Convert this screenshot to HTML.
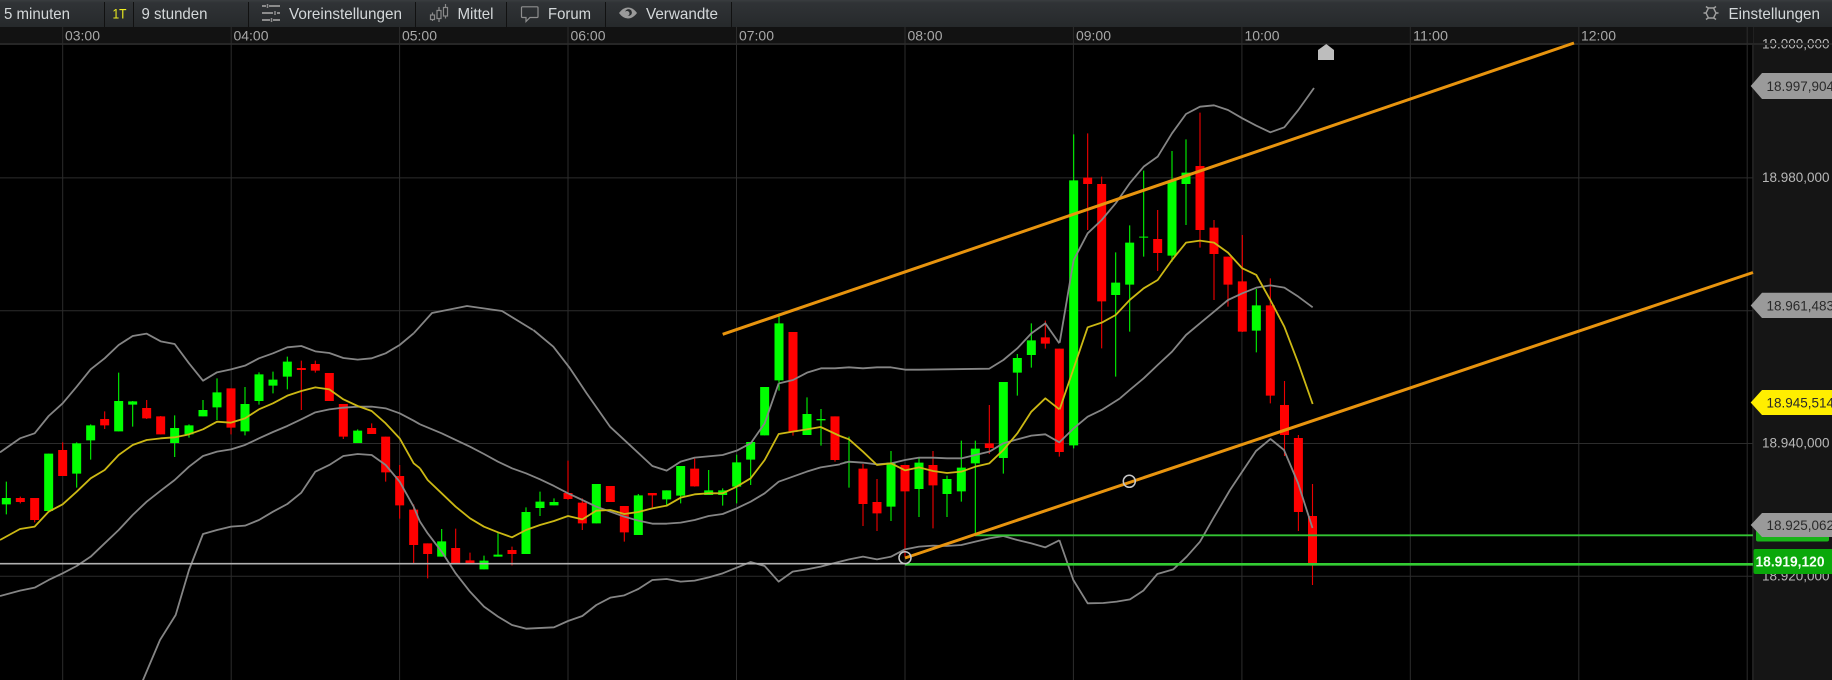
<!DOCTYPE html>
<html lang="de">
<head>
<meta charset="utf-8">
<title>Chart</title>
<style>
html,body{margin:0;padding:0;background:#000;width:1832px;height:680px;overflow:hidden}
svg{display:block}
text{font-family:"Liberation Sans",sans-serif;white-space:pre}
.t{font-size:16px;fill:#d4d8da}
.x{font-size:13.5px;fill:#a8a8a8}
.y{font-size:13.5px;fill:#b8b8b8}
.d{font-size:13.5px;fill:#2a2a2a}
.gw{fill:none;stroke:#00f000;stroke-width:3.4}
.gb{fill:none;stroke:#00ff00;stroke-width:27}
.rw{fill:none;stroke:#ec0000;stroke-width:3.4}
.rb{fill:none;stroke:#ff0000;stroke-width:27}
.b{fill:none;stroke:#858585;stroke-width:5.4;stroke-linejoin:round}
.m{fill:none;stroke:#ccb814;stroke-width:5.4;stroke-linejoin:round}
</style>
</head>
<body>
<svg xmlns="http://www.w3.org/2000/svg" width="1832" height="680" viewBox="0 0 1832 680">
<defs>
<linearGradient id="tb" x1="0" y1="0" x2="0" y2="1"><stop offset="0" stop-color="#3a3d40"/><stop offset=".1" stop-color="#303336"/><stop offset="1" stop-color="#26292b"/></linearGradient>
</defs>
<rect width="1832" height="680" fill="#000"/>

<!-- price axis background -->
<rect x="1753" y="27" width="79" height="653" fill="#151515"/>
<rect x="1752" y="27" width="2" height="653" fill="#202020"/>

<!-- time axis -->
<rect x="0" y="27" width="1753" height="16" fill="#121212"/>
<rect x="0" y="43" width="1832" height="2" fill="#262626"/>

<!-- grid -->
<g fill="none" stroke="#2c2c2c" stroke-width="1">
<path d="M62.7 27V680M231.2 27V680M399.6 27V680M568 27V680M736.5 27V680M905 27V680M1073.4 27V680M1241.9 27V680M1410.3 27V680M1578.8 27V680M1747.2 27V680"/>
<path d="M0 177.9H1753M0 310.7H1753M0 443.5H1753M0 576.3H1753"/>
</g>

<!-- candles zone A -->
<g transform="translate(0,330) scale(.33333)">
<path class="gw" d="M19 455V553M146 371V543M230 337V473M272 283V389M356 128V304M398 213V290M524 256V381M567 283V323M609 210V259M651 145V270M735 171V316M777 127V224M819 125V190M862 80V178M1073 298V339"/>
<path class="gb" d="M19 504V523M146 371V543M230 340V431M272 286V331M356 213V304M398 214V224M524 294V339M567 286V313M609 240V259M651 187V232M735 222V304M777 133V213M819 149V167M862 95V140M1073 302V339"/>
<path class="rw" d="M61 500V520M104 504V577M188 337V438M314 244V297M440 210V267M482 258V313M693 175V313M904 92V240M946 92V128M988 129V213M1030 222V327M1115 280V312M1157 320V455M1199 405V566M1241 523V700"/>
<path class="rb" d="M61 504V516M104 504V570M188 360V438M314 267V286M440 234V265M482 259V313M693 175V293M904 114V120M946 102V122M988 129V213M1030 222V320M1115 294V312M1157 320V427M1199 438V526M1241 539V645"/>
</g>
<!-- candles zone B -->
<g transform="translate(420,330) scale(.33333)">
<path class="gw" d="M65 597V680M192 677V718M234 605V680M318 532V672M360 485V558M402 505V526M529 462V580M655 492V615M740 481V530M782 408V520M866 420V495M908 475V527M950 374V520M992 336V465M1034 171V316"/>
<path class="gb" d="M65 634V680M192 692V718M234 674V680M318 546V672M360 515V534M402 516V526M529 462V580M655 496V615M740 481V508M782 408V497M866 481V495M908 481V495M950 397V470M992 336V389M1034 171V316"/>
<path class="rw" d="M23 640V745M107 596V700M150 668V700M276 650V706M444 392V510M487 505V600M571 468V516M613 528V635M697 489V532M824 386V470"/>
<path class="rb" d="M23 640V672M107 654V700M150 691V700M276 660V672M444 489V507M487 518V580M571 468V516M613 528V607M697 489V496M824 416V469"/>
</g>
<!-- candles zone C -->
<g transform="translate(720,280) scale(.33333)">
<path class="gw" d="M177 100V332M261 352V465M303 387V497M387 470V623M513 513V723M597 535V711M681 587V711M724 482V665M766 482V765M850 306V581M892 222V347M934 130V263"/>
<path class="gb" d="M177 130V301M261 402V465M303 417V421M387 544V548M513 548V680M597 548V627M681 597V642M724 563V634M766 506V550M850 306V534M892 234V278M934 181V225"/>
<path class="rw" d="M219 156V467M345 409V545M429 552V738M471 597V753M555 555V830M639 513V745M808 375V522M976 122V206M1018 206V530"/>
<path class="rb" d="M219 156V456M345 409V540M429 566V672M471 666V700M555 555V634M639 555V616M808 490V504M976 172V191M1018 206V516"/>
</g>
<!-- candles zone D -->
<g transform="translate(1000,100) scale(.33333)">
<path class="gw" d="M221 103V1045M347 457V830M389 376V695M431 212V470M516 153V485M558 118V375M769 567V757"/>
<path class="gb" d="M221 241V1036M347 548V585M389 428V554M431 410V413M516 242V467M558 218V252M769 616V692"/>
<path class="rw" d="M263 100V390M305 230V745M473 330V513M600 38V443M642 360V600M684 470V620M727 405V696M811 535V910"/>
<path class="rb" d="M263 233V252M305 252V604M473 417V459M600 198V390M642 383V462M684 470V554M727 544V695M811 616V887"/>
</g>
<!-- last candles (absolute) -->
<g fill="none">
<path d="M1284.5 381V456M1298.4 435V531M1312.5 484V585" stroke="#ec0000" stroke-width="1.1"/>
<path d="M1284.5 405V435M1298.4 438V512M1312.5 516V563" stroke="#ff0000" stroke-width="9"/>
</g>

<!-- Bollinger bands / MA -->
<g transform="translate(0,330) scale(.33333)">
<polyline class="b" points="0,367 60,325 104,310 146,258 188,220 230,170 272,118 314,85 356,45 398,18 440,11 482,34 524,42 567,100 609,152 651,127 693,118 735,107 777,85 819,70 862,52 904,48 946,64 988,69 1030,84 1073,89 1115,85 1157,70 1199,45 1241,10"/>
<polyline class="b" points="0,798 60,782 104,773 146,750 188,730 230,708 272,680 314,640 356,600 398,555 440,515 482,482 524,450 567,410 609,378 651,365 693,358 735,345 777,325 819,306 862,288 904,268 946,247 988,238 1030,233 1073,230 1115,230 1157,235 1199,250 1241,272 1260,283"/>
<polyline class="b" points="427,1055 480,930 527,855 567,720 609,612 651,600 693,590 735,587 777,570 819,545 862,522 904,488 946,425 988,405 1030,378 1073,372 1115,375 1157,405 1199,455 1241,530 1260,575"/>
<polyline class="m" points="0,630 60,597 104,590 146,545 188,523 230,485 272,445 314,420 356,375 398,345 440,330 482,325 524,322 567,313 609,298 651,275 693,278 735,265 777,238 819,220 862,197 904,183 946,172 988,178 1030,208 1073,228 1115,243 1157,280 1199,325 1241,400 1260,415"/>
</g>
<polyline fill="none" stroke="#858585" stroke-width="1.8" stroke-linejoin="round" points="413.7,333.3 432,313 467,306 502,311 533,330"/>
<g transform="translate(420,330) scale(.33333)">
<polyline class="b" points="340,0 400,50 450,115 500,190 570,290 640,355 697,408 740,422 782,395 824,383 908,375 950,362 992,340 1034,280 1076,160"/>
<polyline class="b" points="0,283 65,310 107,330 150,350 192,372 234,395 276,415 318,430 360,448 402,468 444,490 487,510 529,530 571,545 613,560 655,572 697,581 740,581 782,578 824,570 866,558 908,552 950,535 992,515 1034,490 1076,455 1118,440 1160,425 1202,412 1260,403"/>
<polyline class="b" points="0,575 23,610 65,665 107,730 150,785 192,830 234,860 276,885 318,896 402,892 444,873 487,858 529,825 571,803 613,796 655,777 697,750 740,747 782,755 824,752 866,742 908,730 950,713 992,696 1034,708 1076,755 1118,725 1160,718 1202,710 1260,695"/>
<polyline class="m" points="0,415 23,450 65,490 107,530 150,565 192,590 234,607 276,622 318,600 360,585 402,573 444,558 487,568 529,542 571,540 613,552 655,546 697,535 740,527 782,503 824,493 866,490 908,490 950,470 992,445 1034,390 1076,312 1118,305 1160,298 1202,291 1260,318"/>
</g>
<g transform="translate(720,280) scale(.33333)">
<polyline class="b" points="177,310 219,300 261,278 303,265 345,265 387,262 429,265 471,262 513,262 555,269 597,269 808,266 850,240 892,205 934,160 976,130 1018,190"/>
<polyline class="b" points="360,552 387,545 429,548 471,553 513,550 555,540 597,533 639,533 681,535 724,535 766,525 808,515 850,490 892,478 934,467 976,463 1018,487 1061,445 1103,410 1145,390 1200,355"/>
<polyline class="b" points="360,845 387,838 429,830 471,838 513,830 555,808 597,800 639,797 681,798 724,795 766,785 808,775 850,768 892,780 934,790 976,802 1018,781"/>
<polyline class="m" points="360,468 387,478 429,515 471,555 513,550 555,571 597,562 639,573 681,579 724,575 766,560 808,550 850,510 892,460 934,395 976,355 1018,388"/>
</g>
<g transform="translate(1000,100) scale(.33333)">
<polyline class="b" points="179,728 221,480 263,400 305,360 347,310 389,250 431,200 473,170 516,100 558,42 600,20 642,16 684,30 727,55 769,77 811,97 853,82 895,30 942,-36"/>
<polyline class="b" points="360,895 389,870 431,835 473,795 516,755 558,705 600,670 642,635 684,600 727,580 769,563 811,556 853,563 895,590 938,622"/>
<polyline class="m" points="179,928 263,682 305,668 347,645 389,600 431,565 473,540 516,480 558,428 600,422 642,428 684,458 727,505 769,525 811,600 853,680 895,790 938,912"/>
</g>
<g transform="translate(1040,460) scale(.33333)">
<polyline class="b" points="58,240 100,360 143,430 190,429 230,425 270,418 310,392 352,342 400,328 440,290 480,245 520,175 570,90 630,0"/>
</g>
<polyline fill="none" stroke="#858585" stroke-width="1.8" stroke-linejoin="round" points="1250,460 1256,451 1270.5,439 1284,450 1298,483 1312.5,528"/>

<!-- drawn lines -->
<path d="M0 563.7H905" stroke="#b0b0b0" stroke-width="1.6" fill="none"/>
<path d="M975 535.3H1753" stroke="#33c433" stroke-width="1.8" fill="none"/>
<path d="M905 564.3H1753" stroke="#33cc33" stroke-width="2.6" fill="none"/>
<path d="M722.7 334.3L1574 43M905 558L1753 272.5" stroke="#e8940e" stroke-width="3" fill="none"/>
<circle cx="905" cy="557.7" r="6" fill="none" stroke="#c8c8c8" stroke-width="1.5"/>
<circle cx="1129.3" cy="481.3" r="6" fill="none" stroke="#c8c8c8" stroke-width="1.5"/>
<polygon points="1326.3,44 1334,50 1334,60 1318,60 1318,50" fill="#bdbdbd"/>

<!-- price axis labels -->
<text class="y" x="1762" y="48.5" textLength="67.5" lengthAdjust="spacingAndGlyphs">19.000,000</text>
<rect x="1754" y="43" width="78" height="2" fill="#262626"/>
<text class="y" x="1762" y="182" textLength="67.5" lengthAdjust="spacingAndGlyphs">18.980,000</text>
<text class="y" x="1762" y="447.5" textLength="67.5" lengthAdjust="spacingAndGlyphs">18.940,000</text>
<text class="y" x="1762" y="580.5" textLength="67.5" lengthAdjust="spacingAndGlyphs">18.920,000</text>

<rect x="1756" y="530" width="73" height="11.500" rx="2" fill="#19b419"/>
<polygon points="1762,73 1832,73 1832,99 1762,99 1750.7,86" fill="#9a9a9a"/>
<polygon points="1762,292.700 1832,292.700 1832,318 1762,318 1750.7,305.500" fill="#9a9a9a"/>
<polygon points="1762,390 1832,390 1832,415 1762,415 1750.7,402.500" fill="#ffee00"/>
<polygon points="1762,513 1832,513 1832,537 1762,537 1750.7,525" fill="#9a9a9a"/>
<rect x="1753.500" y="549" width="90" height="25" rx="2" fill="#0aa80a"/>
<text class="d" x="1766.500" y="91" textLength="67.500" lengthAdjust="spacingAndGlyphs">18.997,904</text>
<text class="d" x="1766.500" y="310.500" textLength="67.500" lengthAdjust="spacingAndGlyphs">18.961,483</text>
<text class="d" x="1766.500" y="407.500" textLength="67.500" lengthAdjust="spacingAndGlyphs">18.945,514</text>
<text class="d" x="1766.500" y="530" textLength="67.500" lengthAdjust="spacingAndGlyphs">18.925,062</text>
<text x="1755.500" y="566.500" font-size="14.500" font-weight="700" fill="#f4fff4" textLength="69" lengthAdjust="spacingAndGlyphs">18.919,120</text>

<!-- time labels -->
<text class="x" x="65" y="40.500" textLength="35" lengthAdjust="spacingAndGlyphs">03:00</text>
<text class="x" x="233.500" y="40.500" textLength="35" lengthAdjust="spacingAndGlyphs">04:00</text>
<text class="x" x="402" y="40.500" textLength="35" lengthAdjust="spacingAndGlyphs">05:00</text>
<text class="x" x="570.500" y="40.500" textLength="35" lengthAdjust="spacingAndGlyphs">06:00</text>
<text class="x" x="739" y="40.500" textLength="35" lengthAdjust="spacingAndGlyphs">07:00</text>
<text class="x" x="907.500" y="40.500" textLength="35" lengthAdjust="spacingAndGlyphs">08:00</text>
<text class="x" x="1076" y="40.500" textLength="35" lengthAdjust="spacingAndGlyphs">09:00</text>
<text class="x" x="1244.500" y="40.500" textLength="35" lengthAdjust="spacingAndGlyphs">10:00</text>
<text class="x" x="1413" y="40.500" textLength="35" lengthAdjust="spacingAndGlyphs">11:00</text>
<text class="x" x="1581" y="40.500" textLength="35" lengthAdjust="spacingAndGlyphs">12:00</text>

<!-- toolbar -->
<rect x="0" y="0" width="1832" height="27" fill="url(#tb)"/>
<path d="M104.500 2V27M133.500 2V27M248.500 2V27M415.500 2V27M506.500 2V27M605.500 2V27M731.500 2V27" stroke="#111" stroke-width="1" fill="none"/>
<text class="t" x="4" y="19" textLength="66" lengthAdjust="spacingAndGlyphs">5 minuten</text>
<text x="112.500" y="18.500" font-size="14" fill="#eeee20" textLength="14" lengthAdjust="spacingAndGlyphs">1T</text>
<text class="t" x="141.500" y="19" textLength="66" lengthAdjust="spacingAndGlyphs">9 stunden</text>
<text class="t" x="289" y="19" textLength="113" lengthAdjust="spacingAndGlyphs">Voreinstellungen</text>
<text class="t" x="457.500" y="19" textLength="36" lengthAdjust="spacingAndGlyphs">Mittel</text>
<text class="t" x="548" y="19" textLength="43" lengthAdjust="spacingAndGlyphs">Forum</text>
<text class="t" x="646" y="19" textLength="72" lengthAdjust="spacingAndGlyphs">Verwandte</text>
<text class="t" x="1728.500" y="19" textLength="91.500" lengthAdjust="spacingAndGlyphs">Einstellungen</text>

<!-- icon: sliders -->
<g stroke="#8c8c8c" stroke-width="2" fill="none">
<path d="M262 6H266M269 6H280M262 13H273M277 13H280M262 20H270M273 20H280"/>
<path d="M267.500 4V8M275 11V15M271.500 18V22" stroke-width="1.500"/>
</g>
<!-- icon: candles -->
<g stroke="#8a8a8a" stroke-width="1.200" fill="none">
<path d="M432.500 12.500V21"/>
<rect x="430.500" y="15" width="4" height="4.500" fill="#26292b"/>
<path d="M439 7V22"/>
<rect x="437" y="10.500" width="4" height="8" fill="#26292b"/>
<path d="M445.500 4V18.500"/>
<rect x="443.500" y="7.500" width="4" height="8.500" fill="#26292b"/>
</g>
<!-- icon: speech bubble -->
<path d="M522.500 6.800H537a1 1 0 0 1 1 1V16.500a1 1 0 0 1-1 1H530L526 21.500V17.500H522.500a1 1 0 0 1-1-1V7.800a1 1 0 0 1 1-1Z" fill="none" stroke="#8e8e8e" stroke-width="1.200"/>
<!-- icon: eye -->
<path d="M619 13Q623 7.500 628 7.500T637 13Q633 18.500 628 18.500T619 13Z" fill="#9a9a9a"/>
<circle cx="628.500" cy="12.500" r="3.400" fill="#2a2d2f"/>
<circle cx="627" cy="13.500" r="2.500" fill="#9a9a9a"/>
<!-- icon: settings -->
<g stroke="#a0a0a0" fill="none">
<polygon points="1706,13 1708.500,8 1713.500,8 1716,13 1713.500,18 1708.500,18" stroke-width="1.400"/>
<path d="M1703.500 13H1706M1716 13H1718.500M1706 6.500L1708.300 8.200M1716 6.500L1713.700 8.200M1706 19.500L1708.300 17.800M1716 19.500L1713.700 17.800" stroke-width="1.500"/>
</g>
</svg>
</body>
</html>
